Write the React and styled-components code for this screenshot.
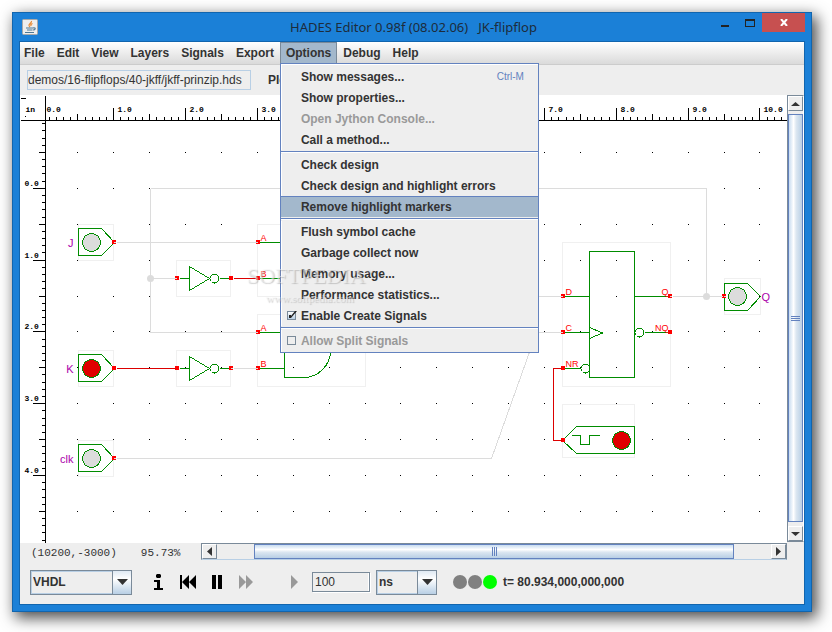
import React, { useState } from 'react';
import styled, { createGlobalStyle, css } from 'styled-components';

const GlobalStyle = createGlobalStyle`
  * {
    box-sizing: border-box;
  }

  body {
    margin: 0;
    background: #fff;
    font-family: 'Liberation Sans', Arial, sans-serif;
    font-size: 12px;
    color: #333;
  }

  button, input, select {
    font: inherit;
    color: inherit;
    margin: 0;
    border-radius: 0;
    outline: none;
  }
`;

const Desktop = styled.div`
  height: 100vh;
  padding: 12px 20px 20px 12px;
  display: flex;
  overflow: hidden;
`;

const Window = styled.div`
  position: relative;
  flex: 1;
  min-width: 0;
  display: flex;
  flex-direction: column;
  background: #1b80d7;
  border: 1px solid #1165ae;
  box-shadow: 4px 5px 14px 1px rgba(0, 0, 0, 0.7);
`;

const TitleBar = styled.header`
  height: 28px;
  padding: 0 6px 0 9px;
  display: grid;
  grid-template-columns: 1fr auto 1fr;
`;

const AppIcon = styled.svg`
  width: 16px;
  height: 16px;
  margin-top: 6px;
`;

const Title = styled.h1`
  margin: 0;
  font: 13px/28px 'Noto Sans', 'Open Sans', sans-serif;
  color: #1d2c3b;
  white-space: pre;
`;

const WindowButtons = styled.div`
  display: flex;
  justify-content: flex-end;
`;

const WindowButton = styled.button`
  width: ${props => (props.$close ? 43 : 25)}px;
  height: 19px;
  padding: 0;
  border: 0;
  background: ${props => (props.$close ? '#c75050' : 'transparent')};
  display: flex;
  justify-content: center;
  align-items: center;
`;

const Content = styled.main`
  flex: 1;
  min-height: 0;
  margin: 0 6px 6px;
  border: 1px solid #1165ae;
  background: #eee;
  display: flex;
  flex-direction: column;
`;

/* 菜单栏 */
const MenuBar = styled.nav`
  height: 23px;
  flex: none;
  display: flex;
  background: linear-gradient(#fff, #dadada);
  border-bottom: 1px solid #ccc;
`;

const MenuSlot = styled.div`
  position: relative;

  &:first-child {
    margin-left: -2px;
  }
`;

const MenuButton = styled.button`
  height: 22px;
  padding: 0 6px;
  border: 0;
  background: transparent;
  font-weight: bold;
  ${props =>
    props.$open &&
    css`
      background: #a3b8cc;
      box-shadow: inset 1px 1px #7a8a99, inset -1px 0 #7a8a99;
    `}
`;

const Popup = styled.div`
  position: absolute;
  z-index: 2;
  top: 21px;
  left: 0;
  width: 259px;
  padding: 2px 0 1px;
  background: #eee;
  border: 1px solid #6382bf;
  box-shadow: inset 1px 1px #fff;
`;

const itemStyle = css`
  width: 100%;
  height: 21px;
  display: flex;
  align-items: center;
  border: 0;
  background: transparent;
  font-weight: bold;
  text-align: left;
  color: ${props => (props.$disabled ? '#999' : '#333')};
`;

const MenuItem = styled.button`
  ${itemStyle}
  justify-content: space-between;
  padding: 0 14px 0 20px;
  ${props =>
    props.$selected &&
    css`
      background: #a3b8cc;
      border-top: 1px solid #6382bf;
    `}
`;

const CheckItem = styled.label`
  ${itemStyle}
  padding-left: 6px;
  gap: 5px;
`;

const CheckBox = styled.span`
  display: grid;

  > * {
    grid-area: 1 / 1;
  }

  svg {
    pointer-events: none;
  }
`;

const Tick = styled.input`
  appearance: none;
  width: 9px;
  height: 9px;
  border: 1px solid #7a8a99;
  background: ${props => (props.disabled ? '#eee' : 'linear-gradient(#fff, #b8cfe5)')};
`;

const Shortcut = styled.span`
  font-size: 10px;
  font-weight: normal;
  color: #6382bf;
`;

const Separator = styled.hr`
  height: 4px;
  margin: 0;
  border: 0;
  background: linear-gradient(#eee 1px, #6382bf 1px, #6382bf 2px, #fff 2px, #fff 3px, #eee 3px);
`;

const ToolBar = styled.div`
  height: 30px;
  flex: none;
  display: flex;
  align-items: center;
  gap: 17px;
  padding-left: 7px;
  font-weight: bold;
`;

const PathInput = styled.input`
  width: 224px;
  height: 20px;
  padding: 0;
  border: 1px solid #b8cfe5;
  background: #eee;
  font-weight: normal;
`;

/* 画布 */
const Workspace = styled.section`
  flex: 1;
  min-height: 0;
  display: flex;
`;

const Canvas = styled.svg`
  flex: 1;
  min-width: 0;
  background: #fff;
  overflow: hidden;
`;

const RulerText = styled.text`
  font: bold 8px 'Liberation Mono', monospace;
  fill: #000;
`;

const PinText = styled.text`
  font-size: 9px;
  fill: #f00;
`;

const PortText = styled.text`
  font-size: 11px;
  fill: #a0a;
`;

/* 滚动条 */
const ScrollBar = styled.div`
  display: flex;
  flex-direction: ${props => (props.$vertical ? 'column' : 'row')};
  border: 1px solid #7a8a99;
  background: #eee;
  ${props =>
    props.$vertical
      ? css`
          width: 17px;
          margin-bottom: 1px;
          border-right-color: #fff;
        `
      : css`
          flex: 1;
          height: 17px;
          border-bottom-color: #b8cfe5;
        `}
`;

const ScrollButton = styled.button`
  width: 15px;
  height: 15px;
  flex: none;
  padding: 0;
  border: 1px solid #7a8a99;
  border-top-color: #fff;
  border-left-color: #fff;
  background: #eee;
  display: flex;
  align-items: center;
  justify-content: center;
`;

const Track = styled.div`
  flex: ${props => props.$size};
`;

const Thumb = styled.div`
  flex: ${props => props.$size};
  display: flex;
  align-items: center;
  justify-content: center;
  border: 1px solid #6382bf;
  background: linear-gradient(
    ${props => (props.$vertical ? '90deg' : '180deg')},
    #c8dcf0,
    #fff 35%,
    #dce7f1 55%,
    #b8cfe5
  );
`;

const Status = styled.div`
  height: 17px;
  flex: none;
  display: flex;
  padding-right: 17px;
`;

const StatusText = styled.div`
  width: 181px;
  padding-left: 11px;
  display: flex;
  gap: 24px;
  font: 11px/20px 'Liberation Mono', 'Courier New', monospace;
`;

/* 仿真控制栏 */
const Controls = styled.footer`
  height: 44px;
  flex: none;
  display: flex;
  align-items: center;
  padding-left: 10px;
  font-weight: bold;
`;

const Combo = styled.div`
  width: ${props => props.$width}px;
  display: grid;

  > * {
    grid-area: 1 / 1;
  }
`;

const Select = styled.select`
  appearance: none;
  height: 25px;
  padding: 0 20px 0 2px;
  border: 1px solid #7a8a99;
  background: #eee;
  font-weight: bold;
  box-shadow: inset 1px 1px #b8cfe5, inset 0 -1px #b8cfe5;
`;

const ComboArrow = styled.span`
  justify-self: end;
  width: 20px;
  height: 25px;
  border: 1px solid #7a8a99;
  background: linear-gradient(#dfe9f3, #fff 35%, #b8cfe5);
  display: flex;
  align-items: center;
  justify-content: center;
  pointer-events: none;
`;

const SimButtons = styled.div`
  display: flex;
  padding: 0 3px 0 12px;
`;

const SimButton = styled.button`
  width: 29px;
  height: 24px;
  padding: 0;
  border: 0;
  background: transparent;
  color: ${props => (props.disabled ? '#999' : '#000')};
  display: flex;
  align-items: center;
  justify-content: center;

  &:last-child {
    margin-left: 20px;
  }
`;

const StepInput = styled.input`
  width: 58px;
  height: 20px;
  margin-right: 6px;
  padding: 0 2px;
  border: 1px solid #7a8a99;
  background: #eee;
  font-weight: normal;
  box-shadow: inset -1px 0 #fff, 1px 1px #fff;
`;

const Lamps = styled.div`
  display: flex;
  gap: 1px;
  margin: 0 6px 0 16px;
`;

const Lamp = styled.span`
  width: 14px;
  height: 14px;
  border-radius: 50%;
  background: ${props => props.$color};
`;

const Watermark = styled.div`
  position: absolute;
  z-index: 3;
  top: 248px;
  left: 233px;
  width: 128px;
  text-align: center;
  pointer-events: none;
  font: 11px/14px 'Liberation Serif', serif;
  color: rgba(245, 245, 245, 0.5);
  text-shadow: 1px 1px 1px rgba(130, 130, 130, 0.4);
`;

const WatermarkName = styled.div`
  font-size: 22px;
  line-height: 30px;
  white-space: nowrap;

  sup {
    font-size: 8px;
    line-height: 8px;
  }
`;

const GREEN = '#008c00';
const RED = '#dc0000';
const GRAY = '#dcdcdc';
const STEP = 35.895;

const menus = ['File', 'Edit', 'View', 'Layers', 'Signals', 'Export', 'Options', 'Debug', 'Help'];

const optionItems = [
  { text: 'Show messages...', shortcut: 'Ctrl-M' },
  { text: 'Show properties...' },
  { text: 'Open Jython Console...', disabled: true },
  { text: 'Call a method...' },
  { separator: true },
  { text: 'Check design' },
  { text: 'Check design and highlight errors' },
  { text: 'Remove highlight markers', selected: true },
  { separator: true },
  { text: 'Flush symbol cache' },
  { text: 'Garbage collect now' },
  { text: 'Memory usage...' },
  { text: 'Performance statistics...' },
  { text: 'Enable Create Signals', check: true, checked: true },
  { separator: true },
  { text: 'Allow Split Signals', check: true, disabled: true }
];

function Arrow({ dir = 'down', width = 9, height = 5 }) {
  const shapes = {
    up: `M0 ${height}L${width / 2} 0L${width} ${height}Z`,
    down: `M0 0H${width}L${width / 2} ${height}Z`,
    left: `M${width} 0V${height}L0 ${height / 2}Z`,
    right: `M0 0V${height}L${width} ${height / 2}Z`
  };
  return (
    <svg width={width} height={height} aria-hidden="true">
      <path d={shapes[dir]} fill="#333" />
    </svg>
  );
}

function OptionsMenu() {
  const [createSignals, setCreateSignals] = useState(true);

  return (
    <Popup>
      {optionItems.map((item, i) => {
        if (item.separator) return <Separator key={i} />;
        if (item.check) {
          const on = item.checked && createSignals;
          return (
            <CheckItem key={item.text} $disabled={item.disabled}>
              <CheckBox>
                <Tick
                  type="checkbox"
                  checked={Boolean(on)}
                  disabled={item.disabled}
                  onChange={e => setCreateSignals(e.target.checked)}
                />
                {on && (
                  <svg width="9" height="9" overflow="visible">
                    <path d="M2 4h2v1L8 0h2L4 7H2z" fill="#222" />
                  </svg>
                )}
              </CheckBox>
              {item.text}
            </CheckItem>
          );
        }
        return (
          <MenuItem
            key={item.text}
            type="button"
            disabled={item.disabled}
            $disabled={item.disabled}
            $selected={item.selected}
          >
            {item.text}
            {item.shortcut && <Shortcut>{item.shortcut}</Shortcut>}
          </MenuItem>
        );
      })}
    </Popup>
  );
}

// 引脚：实心为高电平，notch 表示低电平的开口方向
function Pin({ x, y, notch }) {
  return (
    <>
      <rect x={x - 2.5} y={y - 2.5} width="4" height="4" fill="#f00" />
      {notch && <path d={`M${notch === 'right' ? x - 0.5 : x - 2.5} ${y}h2`} stroke={GRAY} />}
    </>
  );
}

function Bounds({ x, y, w, h }) {
  return <rect x={x} y={y} width={w} height={h} stroke="#f0f0f0" />;
}

function InputPort({ y, label, on }) {
  return (
    <g>
      <Bounds x={78} y={y - 18} w={35} h={36} />
      <path d={`M78 ${y - 14}H101L114 ${y}L101 ${y + 13}H78Z`} stroke={GREEN} />
      <circle cx="91" cy={y} r="9" fill={on ? '#e00000' : GRAY} stroke={GREEN} />
      <Pin x={114} y={y} notch={!on && 'right'} />
      <PortText x="73" y={y + 4} textAnchor="end">{label}</PortText>
    </g>
  );
}

function Inverter({ y, on }) {
  return (
    <g>
      <Bounds x={176} y={y - 18} w={54} h={36} />
      <path d={`M179 ${y}H189M189 ${y - 12}V${y + 12}L209 ${y}ZM219 ${y}H229`} stroke={GREEN} />
      <circle cx="214" cy={y} r="4.5" stroke={GREEN} />
      <Pin x={177} y={y} notch={!on && 'left'} />
      <Pin x={231} y={y} notch={on && 'right'} />
    </g>
  );
}

function AndGate({ y, bOn }) {
  return (
    <g>
      <Bounds x={257} y={y - 36} w={108} h={72} />
      <path
        d={`M259 ${y - 18}H284M259 ${y + 18}H284M284 ${y - 27}H303A27 27 0 0 1 303 ${y + 27}H284Z`}
        stroke={GREEN}
      />
      <Pin x={258} y={y - 18} notch="left" />
      <Pin x={258} y={y + 18} notch={!bOn && 'left'} />
      <PinText x="260" y={y - 20}>A</PinText>
      <PinText x="260" y={y + 16}>B</PinText>
    </g>
  );
}

function FlipFlop() {
  return (
    <g>
      <Bounds x={562} y={242} w={108} h={144} />
      <rect x="589" y="251" width="45" height="126" stroke={GREEN} />
      <path
        d="M564 296H589M564 332H589M564 368H580M634 296H670M644 332H670M589 327L602 332.500L589 338"
        stroke={GREEN}
      />
      <circle cx="585" cy="368" r="4.500" stroke={GREEN} />
      <circle cx="639" cy="332" r="4.500" stroke={GREEN} />
      <Pin x={563} y={296} notch="left" />
      <Pin x={563} y={332} notch="left" />
      <Pin x={563} y={368} />
      <Pin x={670} y={296} notch="right" />
      <Pin x={670} y={332} />
      <PinText x="565" y="294">D</PinText>
      <PinText x="565" y="330">C</PinText>
      <PinText x="565" y="366">NR</PinText>
      <PinText x="668" y="294" textAnchor="end">Q</PinText>
      <PinText x="668" y="330" textAnchor="end">NQ</PinText>
    </g>
  );
}

function ClockGen() {
  return (
    <g>
      <Bounds x={562} y={404} w={72} h={53} />
      <path
        d="M562 440L576 426H634V453H576ZM571 435H580V444H589V435H599"
        stroke={GREEN}
      />
      <circle cx="621" cy="440" r="9" fill="#e00000" stroke={GREEN} />
      <Pin x={563} y={440} />
    </g>
  );
}

function OutputPort() {
  return (
    <g>
      <Bounds x={724} y={278} w={36} h={36} />
      <path d="M724 283H747L760 296L747 310H724Z" stroke={GREEN} />
      <circle cx="737" cy="296" r="9" fill={GRAY} stroke={GREEN} />
      <Pin x={724} y={296} notch="right" />
      <PortText x="761" y="300">Q</PortText>
    </g>
  );
}

// 刻度长度：整数 13，半格 7，其余 4
function tickLength(i) {
  if (i % 5 !== 0) return 4;
  return Math.abs(i / 5) % 2 === 1 ? 13 : 7;
}

function range(from, to) {
  return Array.from({ length: to - from + 1 }, (_, i) => from + i);
}

const gridX = n => Math.floor(77.9 + STEP * n);
const gridY = n => Math.floor(152.45 + STEP * n);

function Rulers() {
  const top = range(-4, 240).map(i => `M${gridX(i / 5)} 120v-${tickLength(i)}`).join('');
  const left = range(-4, 160).map(i => `M45 ${gridY(i / 5)}h-${tickLength(i)}`).join('');

  return (
    <g>
      <path d={`M20 120H2000M45 95V2000M20 98h5${top}${left}`} stroke="#000" />
      <path d="M25 116h0" stroke="#000" strokeLinecap="square" />
      <RulerText x="25" y="111">in</RulerText>
      {range(0, 10).map(i => (
        <RulerText key={i} x={gridX(i * 2 - 1) + 4} y="111">{`${i}.0`}</RulerText>
      ))}
      {range(0, 4).map(i => (
        <RulerText key={i} x="24" y={gridY(i * 2 + 1) - 3}>{`${i}.0`}</RulerText>
      ))}
    </g>
  );
}

function Schematic() {
  const dots = range(0, 48)
    .map(i => range(0, 32).map(j => `M${gridX(i)} ${gridY(j)}h0`).join(''))
    .join('');

  return (
    <Canvas role="img" aria-label="JK-flipflop schematic">
      <g transform="translate(-19.5 -94.5)" fill="none" shapeRendering="crispEdges">
        <path d={dots} stroke="#000" strokeLinecap="square" />
        <Rulers />
        <InputPort y={242} label="J" />
        <InputPort y={368} label="K" on />
        <InputPort y={458} label="clk" />
        <Inverter y={278} />
        <Inverter y={368} on />
        <AndGate y={260} bOn />
        <AndGate y={350} />
        <FlipFlop />
        <ClockGen />
        <OutputPort />
        <path
          d="M116 242H256M150 188V332H256M150 278H175M233 368H256M150 188H706V296M400 296H561M672 296H722M116 458H491L536 332H561"
          stroke={GRAY}
        />
        <path d="M116 368H175M233 278H256M561 368H553V440H561" stroke={RED} />
        <g fill={GRAY} shapeRendering="auto">
          <circle cx="150" cy="278" r="3.5" />
          <circle cx="706" cy="296" r="3.5" />
        </g>
      </g>
    </Canvas>
  );
}

function ScrollBars({ vertical }) {
  return (
    <ScrollBar $vertical={vertical}>
      <ScrollButton type="button" aria-label={vertical ? 'Up' : 'Left'}>
        {vertical ? <Arrow dir="up" height={4} /> : <Arrow dir="left" width={5} height={9} />}
      </ScrollButton>
      <Track $size={vertical ? 3 : 37} />
      <Thumb $vertical={vertical} $size={vertical ? 408 : 481}>
        <svg width="9" height="9" shapeRendering="crispEdges">
          <path
            d={vertical ? 'M0 2.5H9M0 4.500H9M0 6.500H9' : 'M2.500 0V9M4.500 0V9M6.500 0V9'}
            stroke="#6382bf"
          />
        </svg>
      </Thumb>
      <Track $size={vertical ? 4 : 37} />
      <ScrollButton type="button" aria-label={vertical ? 'Down' : 'Right'}>
        {vertical ? <Arrow dir="down" height={4} /> : <Arrow dir="right" width={5} height={9} />}
      </ScrollButton>
    </ScrollBar>
  );
}

function ComboBox({ label, width, options }) {
  return (
    <Combo $width={width}>
      <Select aria-label={label} defaultValue={options[0]}>
        {options.map(o => (
          <option key={o}>{o}</option>
        ))}
      </Select>
      <ComboArrow>
        <Arrow width={11} height={6} />
      </ComboArrow>
    </Combo>
  );
}

function JavaIcon() {
  return (
    <AppIcon viewBox="0 0 16 16">
      <rect x="0.5" y="0.5" width="15" height="15" rx="1" fill="#eee" stroke="#a9a9a9" />
      <path d="M9.500 2C10 4 6.500 5 7 6.500Q7.200 7.500 8 8M10.500 4.500C8.500 5.500 8.500 6 9.200 7" fill="none" stroke="#e8852b" strokeWidth="1.200" />
      <path d="M4 9H11.500M5 11H10.500M11.500 8.800C14 8.500 13.500 11 11 11M3 13.500H12" fill="none" stroke="#4d7896" strokeWidth="1.200" />
    </AppIcon>
  );
}

function App() {
  const [path, setPath] = useState('demos/16-flipflops/40-jkff/jkff-prinzip.hds');
  const [step, setStep] = useState('100');

  return (
    <>
      <GlobalStyle />
      <Desktop>
        <Window>
          <TitleBar>
            <JavaIcon />
            <Title>{'HADES Editor 0.98f (08.02.06)   JK-flipflop'}</Title>
            <WindowButtons>
              <WindowButton type="button" aria-label="Minimize">
                <svg width="8" height="8"><path d="M0 6H8V8H0Z" fill="#222" /></svg>
              </WindowButton>
              <WindowButton type="button" aria-label="Maximize">
                <svg width="10" height="8" shapeRendering="crispEdges">
                  <path d="M0 0H10V8H0ZM1 2V7H9V2Z" fill="#222" fillRule="evenodd" />
                </svg>
              </WindowButton>
              <WindowButton type="button" aria-label="Close" $close>
                <svg width="8" height="7"><path d="M1 0L7 7M7 0L1 7" stroke="#fff" strokeWidth="2" /></svg>
              </WindowButton>
            </WindowButtons>
          </TitleBar>
          <Content>
            <MenuBar>
              {menus.map(name => (
                <MenuSlot key={name}>
                  <MenuButton type="button" $open={name === 'Options'}>{name}</MenuButton>
                  {name === 'Options' && <OptionsMenu />}
                </MenuSlot>
              ))}
            </MenuBar>
            <ToolBar>
              <PathInput aria-label="Design" value={path} onChange={e => setPath(e.target.value)} />
              <span>Ple</span>
            </ToolBar>
            <Workspace>
              <Schematic />
              <ScrollBars vertical />
            </Workspace>
            <Status>
              <StatusText>
                <span>(10200,-3000)</span>
                <span>95.73%</span>
              </StatusText>
              <ScrollBars />
            </Status>
            <Controls>
              <ComboBox label="Language" width={102} options={['VHDL']} />
              <SimButtons>
                <SimButton type="button" aria-label="Info">
                  <svg width="9" height="16" fill="currentColor">
                    <path d="M3 0H6L7 1V3L6 4H3L2 3V1ZM0 6H6V14H9V16H0V14H3V8H0Z" />
                  </svg>
                </SimButton>
                <SimButton type="button" aria-label="Rewind">
                  <svg width="16" height="14" fill="currentColor">
                    <path d="M0 0H2V14H0ZM9 0V14L2 7ZM16 0V14L9 7Z" />
                  </svg>
                </SimButton>
                <SimButton type="button" aria-label="Pause">
                  <svg width="10" height="14" fill="currentColor">
                    <path d="M0 0H4V14H0ZM6 0H10V14H6Z" />
                  </svg>
                </SimButton>
                <SimButton type="button" aria-label="Run" disabled>
                  <svg width="14" height="14" fill="currentColor">
                    <path d="M0 0L7 7L0 14ZM7 0L14 7L7 14Z" />
                  </svg>
                </SimButton>
                <SimButton type="button" aria-label="Step" disabled>
                  <svg width="7" height="14" fill="currentColor">
                    <path d="M0 0L7 7L0 14Z" />
                  </svg>
                </SimButton>
              </SimButtons>
              <StepInput aria-label="Step time" value={step} onChange={e => setStep(e.target.value)} />
              <ComboBox label="Unit" width={61} options={['ns', 'us', 'ms']} />
              <Lamps>
                <Lamp $color="#808080" />
                <Lamp $color="#808080" />
                <Lamp $color="#0f0" />
              </Lamps>
              <span>t= 80.934,000,000,000</span>
            </Controls>
          </Content>
          <Watermark>
            <WatermarkName>SOFTPEDIA<sup>™</sup></WatermarkName>
            www.softpedia.com
          </Watermark>
        </Window>
      </Desktop>
    </>
  );
}

export default App;
